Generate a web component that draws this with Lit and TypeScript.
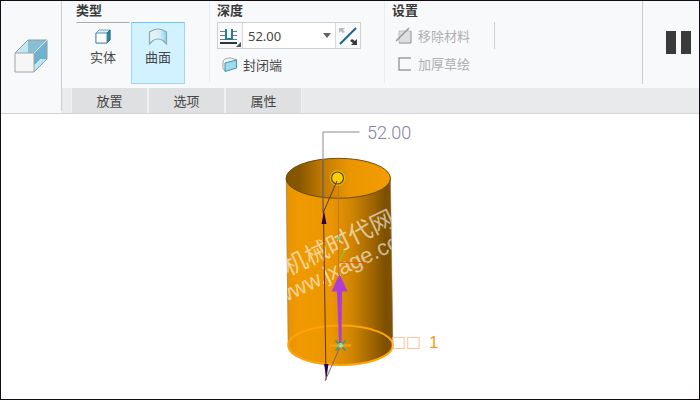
import { LitElement, html, svg, css } from "lit";
import { customElement, state } from "lit/decorators.js";

const UI = css`"Noto Sans", "Noto Sans CJK SC", sans-serif`;

@customElement("model-view")
class ModelView extends LitElement {
  static styles = css`
    :host { display: flex; flex: 1; min-height: 0; background: #fff; }
    svg { width: 100%; height: 100%; display: block; }
    .dim { font: 300 18px Roboto, sans-serif; fill: #8482a0; }
    .sketch { font: 16px "DejaVu Sans", sans-serif; fill: #fdc08f; }
    .number { font: 17px "Liberation Sans", sans-serif; fill: #f79a1c; }
    .mark { font-family: "Noto Sans CJK SC", sans-serif; font-size: 24px; fill: #fff; fill-opacity: 0.6; }
    .site { font-family: "Liberation Sans", sans-serif; font-size: 22px; fill: #fff; fill-opacity: 0.6; }
  `;

  render() {
    return html`<svg viewBox="1 114 698 285" role="img" aria-label="曲面拉伸 52.00">
      ${svg`
      <defs>
        <linearGradient id="wall" x1="0" x2="1">
          <stop offset="0" stop-color="#e79300" />
          <stop offset="0.12" stop-color="#f09a00" />
          <stop offset="0.42" stop-color="#eb9600" />
          <stop offset="0.62" stop-color="#cf8500" />
          <stop offset="0.82" stop-color="#9c6300" />
          <stop offset="0.93" stop-color="#7d4f00" />
          <stop offset="1" stop-color="#805200" />
        </linearGradient>
        <linearGradient id="inside" x1="0" x2="1">
          <stop offset="0" stop-color="#855400" />
          <stop offset="0.12" stop-color="#875600" />
          <stop offset="0.35" stop-color="#c17b00" />
          <stop offset="0.6" stop-color="#ea9600" />
          <stop offset="1" stop-color="#f39c00" />
        </linearGradient>
        <clipPath id="body">
          <path d="M286 178 L288 345 A52.5 20 0 0 0 393 345 L390.5 178 A52 20 0 0 0 286 178Z" />
        </clipPath>
      </defs>
      <path d="M286 178 L288 345 A52.5 20 0 0 0 393 345 L390.5 178Z" fill="url(#wall)" />
      <path d="M286.2 178 L288.2 345 M390.4 178 L392.8 345" stroke="#9a8270" stroke-width=".6" />
      <ellipse cx="338.3" cy="178.3" rx="52.2" ry="20" fill="url(#inside)" stroke="#5e4310" stroke-width=".9" />
      <g clip-path="url(#body)">
        <text class="mark" transform="translate(288 276) rotate(-25.5)">机械时代网</text>
        <text class="site" transform="translate(280 305) rotate(-25.5)">www.jxage.com</text>
      </g>
      <ellipse cx="340.5" cy="345.3" rx="52.3" ry="19.7" fill="none" stroke="#ffa307" stroke-width="2" />
      <path d="M359.500 132H323V212" fill="none" stroke="#8c8699" stroke-width="1" />
      <path d="M323 160V212" stroke="#6b4a35" stroke-width="1" />
      <path d="M323.500 213 L326 380" stroke="#5c3420" stroke-width="1" />
      <circle cx="337.500" cy="178" r="7.700" fill="#ecb800" />
      <circle cx="337.500" cy="178" r="6" fill="#ffcf00" stroke="#4f4718" stroke-width="1.200" />
      <path d="M337 181 L323 213" stroke="#60351c" stroke-width="1" />
      <path d="M338.500 186V275" stroke="#c0702a" stroke-width=".8" />
      <circle cx="339" cy="238" r="1.500" fill="#45e0f0" />
      <path d="M340 261 L344 251" stroke="#7fd61e" stroke-width="1" />
      <circle cx="344" cy="251.500" r="1" fill="#6be818" />
      <path d="M340 262.500H367" stroke="#f2491c" stroke-width=".8" />
      <path d="M324 211 L321.500 224H326.500Z M324 364H328.500L326.500 378Z" fill="#2b0055" />
      <path d="M330 345.500H351" stroke="#ff9f0c" stroke-width="2" />
      <path d="M339.500 274 L331.500 291.500H337L339 343H341.500L342 291.500H347.500Z" fill="#b03bd6" />
      <path d="M340 347 L325 381" stroke="#7b6670" stroke-width="1" />
      <path d="M335.500 340.500 L345.500 350.500 M345.500 340.500 L335.500 350.500" stroke="#1b9da5" stroke-width="1.500" />
      <circle cx="340.500" cy="345.500" r="2.500" fill="#61cfb2" />
      <path d="M339 346H343 M341 343V347" stroke="#ffe23c" stroke-width="1" />
      <text class="dim" x="367" y="139">52.00</text>
      <text class="sketch" x="391" y="347">□□</text>
      <text class="number" x="429" y="348">1</text>
      `}
    </svg>`;
  }
}

@customElement("app-root")
class AppRoot extends LitElement {
  @state() private kind = "surface";

  static styles = css`
    :host {
      display: flex; flex-direction: column; min-height: 100vh; box-sizing: border-box;
      border: 1px solid #120c16; background: #fff; color: #454545;
      font: 13px/20px ${UI};
    }
    button, input { font: inherit; color: inherit; margin: 0; padding: 0; border: 0; background: none; border-radius: 0; box-sizing: border-box; }
    svg { display: block; flex: none; }
    .ribbon { display: grid; grid-template-columns: 61px 1fr; background: #f8f9fb; border-bottom: 1px solid #d1d3d4; }
    .feature { display: flex; align-items: center; justify-content: center; border-right: 1px solid #cbccce; margin-bottom: 2px; }
    .top { display: flex; height: 87px; }
    .group { padding: 0 23px 0 7px; }
    .type { padding: 0 24px 0 14px; }
    .divided { border-left: 1px solid #ebecee; margin-bottom: 5px; }
    h2 { font-size: 13px; line-height: 18px; font-weight: 700; margin: 0 0 3px; color: #3a3a3a; }
    .kinds { display: flex; gap: 1px; }
    .kind {
      width: 54px; height: 62px; display: flex; flex-direction: column; align-items: center;
      border: 1px solid transparent; border-top: 1px solid #a9abad; padding-top: 5px; gap: 1px;
    }
    .kind.on { background: #d2f2ff; border-color: #9ed6f4; border-top-color: #6cc4f4; }
    .combo { display: flex; width: 144px; height: 27px; box-sizing: border-box; border: 1px solid #cfd0d2; background: #fff; }
    .mode, .flip { width: 25px; display: flex; align-items: center; justify-content: center; background: #f8f9fb; }
    .mode { border-right: 1px solid #d8d9db; }
    .flip { border-left: 1px solid #d8d9db; }
    .value { flex: 1; min-width: 0; padding-left: 5px; }
    .drop { width: 16px; display: flex; align-items: center; justify-content: center; }
    .tool { display: flex; align-items: center; gap: 5px; height: 28px; }
    .depth .tool { padding: 3px 0 0 5px; }
    .settings { display: flex; gap: 24px; }
    .settings .tool { padding-left: 3px; color: #aeb0b2; }
    .rule { width: 1px; height: 27px; margin-top: 21px; background: #cfd1d3; }
    .run { margin-left: auto; width: 57px; border-left: 1px solid #c9cacc; margin-bottom: 4px; display: flex; align-items: center; justify-content: flex-end; padding-right: 8px; box-sizing: border-box; }
    .tabs { display: flex; gap: 2px; height: 25px; padding-left: 10px; background: #e9eaec; }
    .tab { width: 75px; background: #dfe0e2; box-shadow: 0 0 0 1px #f0f1f2; clip-path: inset(0 -1px); }
  `;

  render() {
    return html`
      <header class="ribbon">
        <div class="feature">
          <svg width="36" height="36" viewBox="0 0 36 36">
            <path d="M2 15 L15 2H34V21L21 34V15Z" fill="#fff" />
            <path d="M2 15 L15 2V15Z" fill="#bee8f6" /><path d="M15 2H34L21 15H15Z" fill="#89bed2" />
            <path d="M21 15L34 2V21H28L21 28Z" fill="#6fb2cf" />
            <path d="M21 34V28L28 21H34Z" fill="#b8e6f8" />
            <path d="M2 15 L15 2H34V21L21 34" fill="none" stroke="#969899" />
            <path d="M21 15L34 2 M21 28L28 21" stroke="#d2eaf2" />
            <path d="M2 15H21V34H2Z" fill="#f6f6f6" stroke="#a2a4a5" />
          </svg>
        </div>
        <div>
          <div class="top">
            <section class="group type">
              <h2>类型</h2>
              <div class="kinds">
                <button class="kind ${this.kind === "solid" ? "on" : ""}" @click=${() => (this.kind = "solid")}>
                  <svg width="18" height="18" viewBox="0 0 18 18">
                    <path d="M2 5L5 2H16V12L13 15H2Z" fill="#d5eff8" stroke="#72a8bd" />
                    <path d="M13 5L16 2V12L13 15Z" fill="#2f88aa" stroke="#1f6c8c" />
                    <path d="M2 5H13V15H2Z" fill="#fbfcfc" stroke="#548da4" />
                  </svg>
                  实体
                </button>
                <button class="kind ${this.kind === "surface" ? "on" : ""}" @click=${() => (this.kind = "surface")}>
                  <svg width="20" height="18" viewBox="0 0 20 18">
                    <defs><linearGradient id="s"><stop stop-color="#eaf4f7" /><stop offset=".6" stop-color="#d8edf5" /><stop offset="1" stop-color="#87d5f5" /></linearGradient></defs>
                    <path d="M1.500 4Q10 -2 18.500 4V16L15 12.500Q10 9.500 5 12.500L1.500 16Z" fill="url(#s)" stroke="#92a5ad" stroke-width="1.200" />
                  </svg>
                  曲面
                </button>
              </div>
            </section>
            <section class="group divided depth">
              <h2>深度</h2>
              <div class="combo">
                <button class="mode" aria-label="深度选项">
                  <svg width="22" height="22" viewBox="0 0 22 22">
                    <path d="M1 6.500H6 M1 10.500H6 M1 14.500H18 M14 6.500H18 M14 10.500H18" stroke="#77797a" />
                    <path d="M7 4V14H13V4" fill="#fff" stroke="#247ca2" stroke-width="2" />
                    <path d="M1 18H18" stroke="#333" stroke-width="2" />
                    <path d="M22 17V22H17Z" fill="#555" />
                  </svg>
                </button>
                <input class="value" aria-label="深度" value="52.00" />
                <button class="drop" aria-label="深度列表"><svg width="8" height="5" viewBox="0 0 8 5"><path d="M0 0H8L4 5Z" fill="#606264" /></svg></button>
                <button class="flip" aria-label="反向">
                  <svg width="20" height="20" viewBox="0 0 20 20">
                    <path d="M2 18L18 2" stroke="#1d6587" stroke-width="2" />
                    <path d="M1 2H7L5 4L7 6L5 7L3 5L1 7Z" fill="#b7b8b9" />
                    <path d="M19 13V19H13L15 17L12 15L14 13L17 15Z" fill="#37393a" />
                  </svg>
                </button>
              </div>
              <button class="tool">
                <svg width="16" height="16" viewBox="0 0 16 16">
                  <path d="M1 5Q1 1 9 1L15 3L4 7V14L1 12Z" fill="#f8f8f8" stroke="#a3a5a6" />
                  <path d="M3 6L14.500 3V11L3 14.500Z" fill="#9edbf1" stroke="#3e91b1" />
                </svg>
                封闭端
              </button>
            </section>
            <section class="group divided settings">
              <div>
                <h2>设置</h2>
                <button class="tool" disabled>
                  <svg width="18" height="18" viewBox="0 0 18 18">
                    <path d="M4 4H16V16H4Z" fill="#dedfe0" stroke="#bfc0c1" />
                    <path d="M16 4V16H4" fill="none" stroke="#a3a4a5" /><path d="M1 14L14 1" stroke="#969798" stroke-width="1.500" />
                  </svg>
                  移除材料
                </button>
                <button class="tool" disabled>
                  <svg width="18" height="18" viewBox="0 0 18 18"><path d="M16 3H4V15H16" fill="none" stroke="#9b9d9f" stroke-width="1.500" /></svg>
                  加厚草绘
                </button>
              </div>
              <span class="rule"></span>
            </section>
            <div class="run">
              <button aria-label="暂停"><svg width="25" height="23" viewBox="0 0 25 23"><path d="M0 0H10V23H0Z M15 0H25V23H15Z" fill="#3a3a3b" /></svg></button>
            </div>
          </div>
          <nav class="tabs">
            <button class="tab">放置</button>
            <button class="tab">选项</button>
            <button class="tab">属性</button>
          </nav>
        </div>
      </header>
      <model-view></model-view>
    `;
  }
}
